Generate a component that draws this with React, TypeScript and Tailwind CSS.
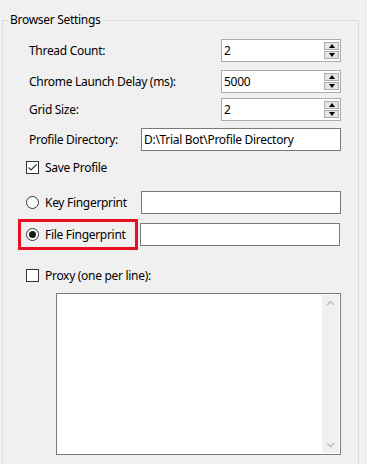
import type { ReactNode } from 'react'

const font = "font-['Segoe_UI','Noto_Sans',sans-serif]"

function Spinner() {
  return (
    <div className="mr-[1px] flex flex-col gap-[1px]">
      <div className="flex h-[8px] w-[15px] items-center justify-center border border-[#adadad] bg-[#e5e5e5]">
        <div className="h-0 w-0 border-x-[3.5px] border-b-[4px] border-x-transparent border-b-black" />
      </div>
      <div className="flex h-[8px] w-[15px] items-center justify-center border border-[#adadad] bg-[#e5e5e5]">
        <div className="h-0 w-0 border-x-[3.5px] border-t-[4px] border-x-transparent border-t-black" />
      </div>
    </div>
  )
}

function NumberRow({ label, value, className }: { label: string; value: string; className: string }) {
  return (
    <div className={`flex h-[23px] items-center justify-between pl-[3px] ${className}`}>
      <span>{label}</span>
      <div className="flex h-[23px] w-[120px] items-center justify-between border border-[#acacac] bg-white pl-[2px]">
        <span>{value}</span>
        <Spinner />
      </div>
    </div>
  )
}

function TextBox({ value = '', className = '' }: { value?: string; className?: string }) {
  return (
    <div className={`flex h-[23px] w-[200px] items-center border border-[#7a7a7a] bg-white pl-[2px] ${className}`}>
      {value}
    </div>
  )
}

function CheckBox({ checked, children, className }: { checked: boolean; children: ReactNode; className: string }) {
  return (
    <div className={`flex h-[13px] items-center gap-[6px] ${className}`}>
      <div className="flex h-[13px] w-[13px] items-center justify-center border border-[#333] bg-white">
        {checked && (
          <svg width="11" height="11" viewBox="0 0 11 11">
            <path d="M1.5 5.5 L4 8 L9.5 2.5" fill="none" stroke="#333" strokeWidth="1.2" />
          </svg>
        )}
      </div>
      <span className="leading-[16px]">{children}</span>
    </div>
  )
}

function Radio({ checked, children }: { checked: boolean; children: ReactNode }) {
  return (
    <div className="flex items-center gap-[6px]">
      <div className="flex h-[13px] w-[13px] items-center justify-center rounded-full border border-[#333] bg-white">
        {checked && <div className="h-[7px] w-[7px] rounded-full bg-[#1a1a1a]" />}
      </div>
      <span className="leading-[16px]">{children}</span>
    </div>
  )
}

export default function App() {
  return (
    <div className={`h-[464px] w-[367px] overflow-hidden bg-[#f0f0f0] text-[12px] tracking-[-0.3px] text-black ${font}`}>
      <fieldset className="ml-[2px] mt-[12px] h-[480px] w-[357px] border border-[#dcdcdc] pl-[5px]">
        <legend className="px-[2px] leading-[16px]">Browser Settings</legend>

        <div className="ml-[18px] w-[315px]">
          <NumberRow label="Thread Count:" value="2" className="mt-[11px]" />
          <NumberRow label="Chrome Launch Delay (ms):" value="5000" className="mt-[8px]" />
          <NumberRow label="Grid Size:" value="2" className="mt-[5px]" />

          <div className="mt-[7px] flex h-[23px] items-center justify-between pl-[3px]">
            <span>Profile Directory:</span>
            <TextBox value="D:\Trial Bot\Profile Directory" />
          </div>

          <CheckBox checked className="mt-[10px]">Save Profile</CheckBox>

          <div className="mt-[17px] flex h-[23px] items-center">
            <div className="w-[115px]">
              <Radio checked={false}>Key Fingerprint</Radio>
            </div>
            <TextBox />
          </div>

          <div className="ml-[-8px] mt-[5px] flex items-center">
            <div className="flex h-[31px] w-[120px] items-center border-[3px] border-[#e81123] pl-[5px]">
              <Radio checked>File Fingerprint</Radio>
            </div>
            <TextBox className="ml-[2px]" />
          </div>

          <CheckBox checked={false} className="mt-[19px]">Proxy (one per line):</CheckBox>

          <div className="ml-[30px] mt-[11px] flex h-[162px] w-[285px] justify-end border border-[#7a7a7a] bg-white p-[1px]">
            <div className="flex w-[17px] flex-col items-center justify-between bg-[#f0f0f0] py-[5px]">
              <svg width="9" height="6" viewBox="0 0 9 6">
                <path d="M1 5 L4.5 1.5 L8 5" fill="none" stroke="#c2c2c2" strokeWidth="1.6" />
              </svg>
              <svg width="9" height="6" viewBox="0 0 9 6">
                <path d="M1 1 L4.5 4.5 L8 1" fill="none" stroke="#c2c2c2" strokeWidth="1.6" />
              </svg>
            </div>
          </div>
        </div>
      </fieldset>
    </div>
  )
}
